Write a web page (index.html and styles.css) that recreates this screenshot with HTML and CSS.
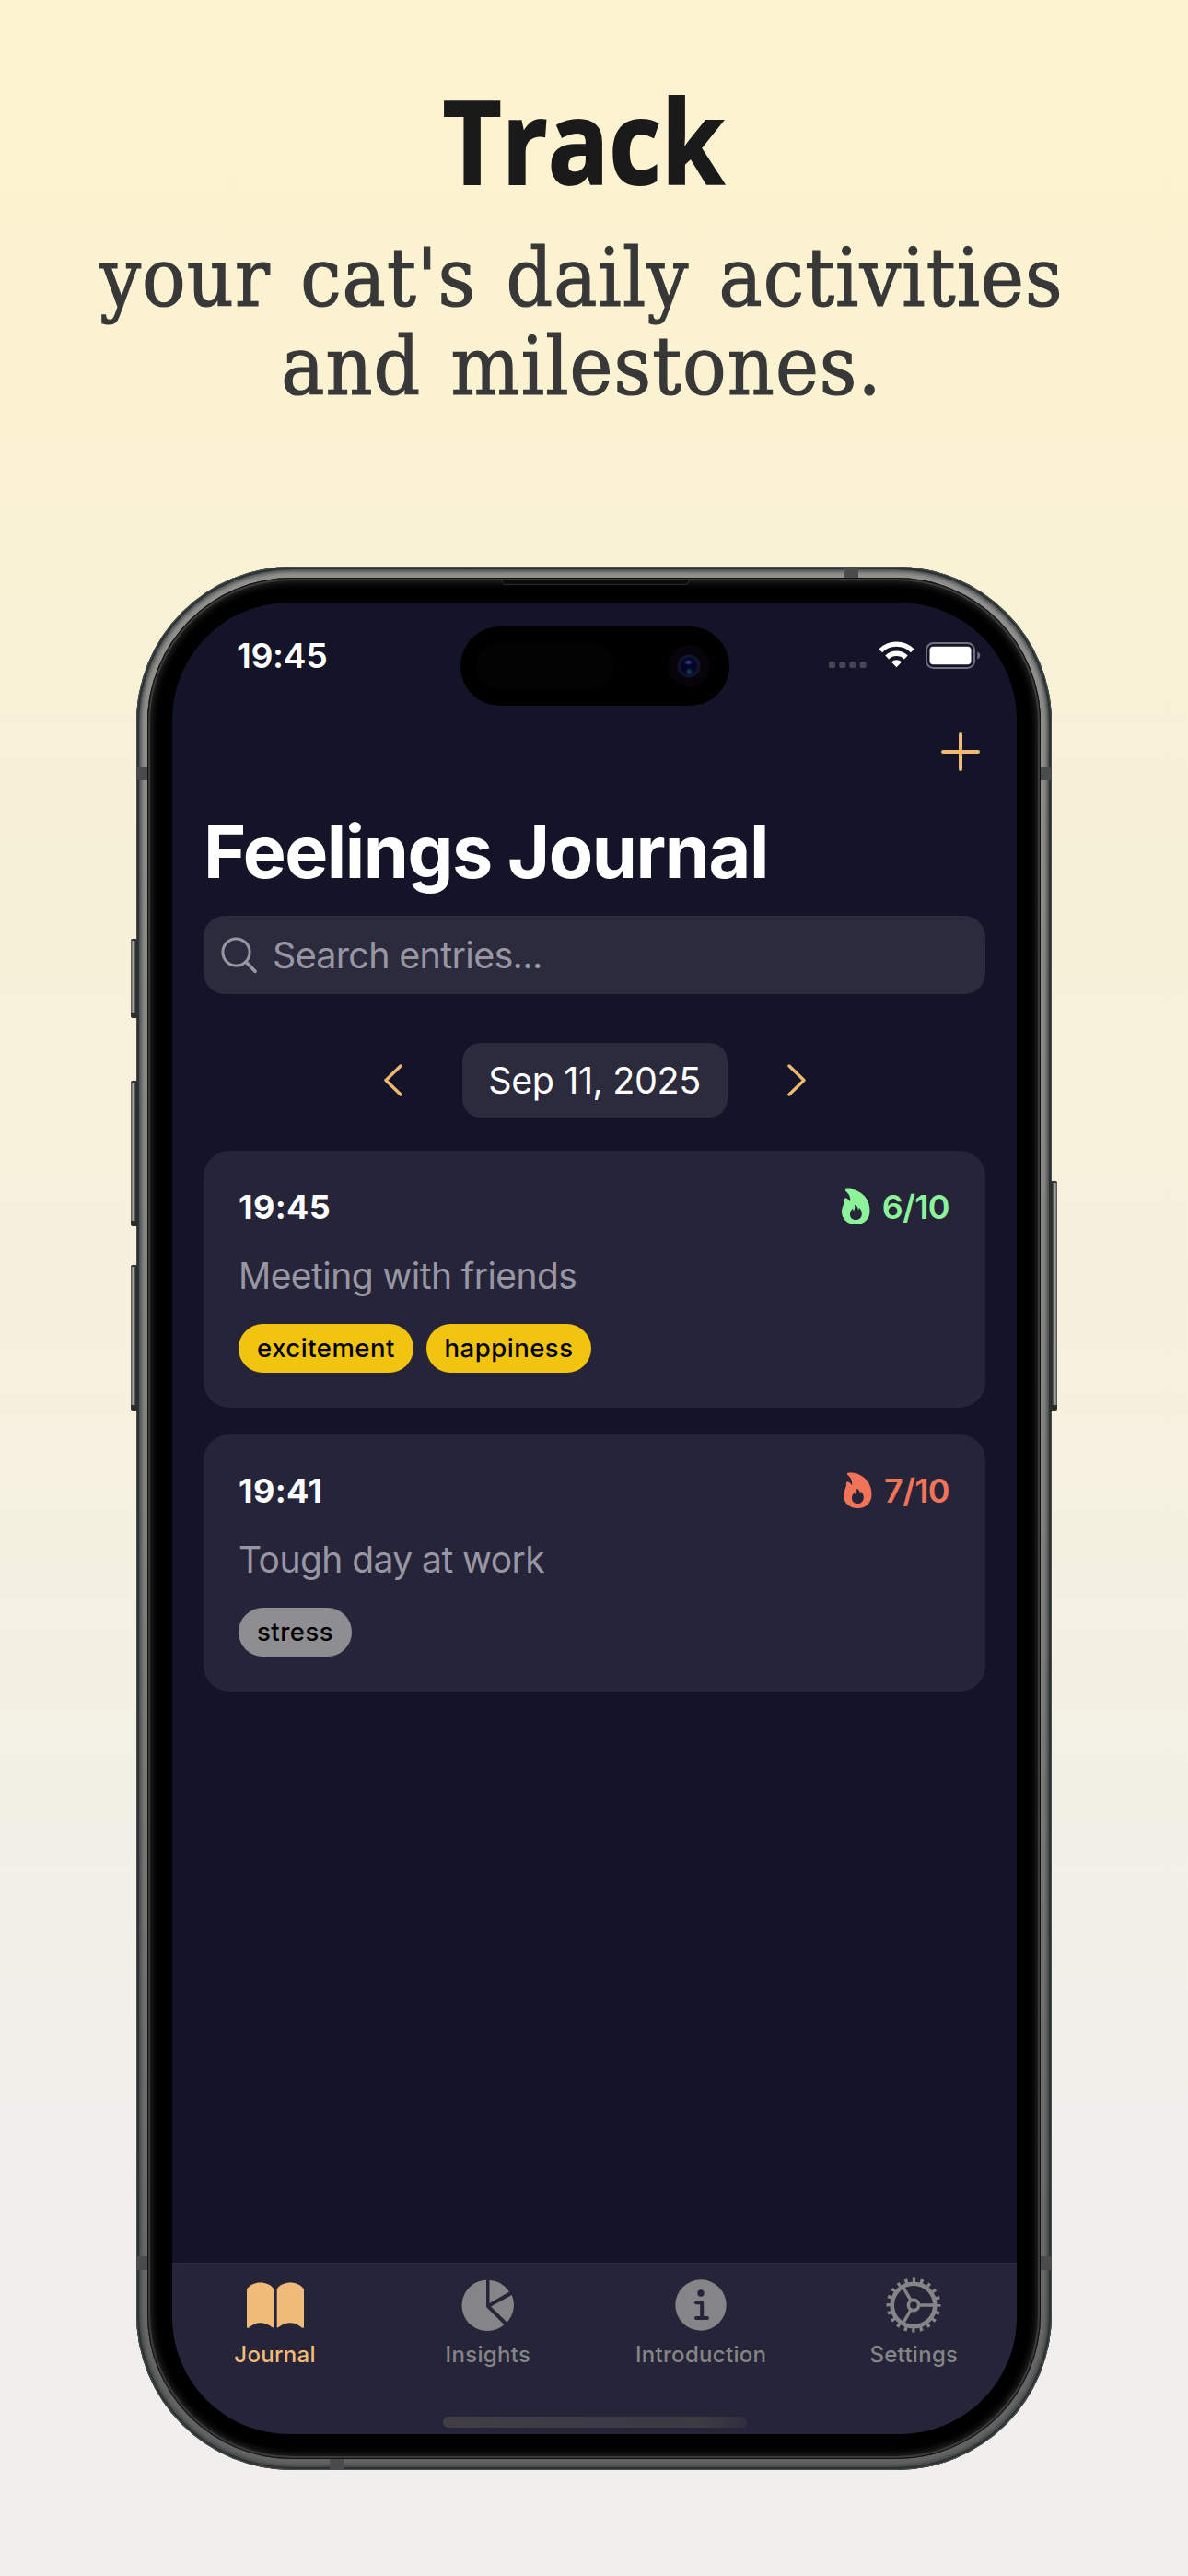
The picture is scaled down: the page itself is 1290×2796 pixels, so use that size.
FILE: index.html
```html
<!DOCTYPE html>
<html lang="en">
<head>
<meta charset="utf-8">
<title>Feelings Journal</title>
<link rel="stylesheet" href="styles.css">
</head>
<body>
<main class="poster">
  <header class="headline">
    <h1 class="headline-title">Track</h1>
    <p class="headline-sub">your cat's daily activities</p>
    <p class="headline-sub second">and milestones.</p>
  </header>

  <section class="phone">
    <i class="key left key-action"></i>
    <i class="key left key-up"></i>
    <i class="key left key-down"></i>
    <i class="key right key-power"></i>
    <div class="bezel">
      <i class="speaker"></i>
      <div class="screen">
        <i class="island"><i class="sensor"></i><i class="camera"></i></i>
        <div class="status">
          <span class="status-time">19:45</span>
          <span class="status-icons">
            <svg class="dots" width="41" height="7" viewBox="0 0 41 7"><g fill="#484656"><rect width="7" height="7" rx="2.6"/><rect x="11.3" width="7" height="7" rx="2.6"/><rect x="22.4" width="7" height="7" rx="2.6"/><rect x="33.6" width="7" height="7" rx="2.6"/></g></svg>
            <svg class="wifi" width="39" height="29" viewBox="0 0 39 29"><g fill="none" stroke="#fff" stroke-width="5.4"><path d="M2.2 10.3a24.5 24.5 0 0 1 34.6 0"/><path d="M9.2 17.5a14.6 14.6 0 0 1 20.6 0"/></g><path d="M19.5 28.2l-5.6-5.6a8 8 0 0 1 11.2 0z" fill="#fff"/></svg>
            <svg class="battery" width="60" height="29" viewBox="0 0 60 29"><rect x="1" y="1" width="52" height="27" rx="7.5" fill="none" stroke="#706f7f" stroke-width="2"/><rect x="4.5" y="4.7" width="45" height="19.6" rx="4" fill="#fff"/><path d="M56.3 10.200q3 1.500 3 4.300t-3 4.300z" fill="#706f7f"/></svg>
          </span>
        </div>
        <div class="navbar">
          <svg width="42" height="42" viewBox="0 0 42 42"><path d="M21 2v38M2 21h38" stroke="#f1b873" stroke-width="4" stroke-linecap="round"/></svg>
        </div>
        <h2 class="title">Feelings Journal</h2>
        <div class="search">
          <svg width="40" height="40" viewBox="0 0 40 40"><g fill="none" stroke="#9896a3" stroke-width="3" stroke-linecap="round"><circle cx="16.500" cy="16.500" r="14.600"/><path stroke-width="3.800" d="M27.500 27.500l9.500 9.800"/></g></svg>
          <span>Search entries...</span>
        </div>
        <div class="dates">
          <svg width="20" height="35" viewBox="0 0 20 35"><path d="M18 2L2 17.500L18 33" fill="none" stroke="#f1b873" stroke-width="3.400" stroke-linecap="round" stroke-linejoin="round"/></svg>
          <span class="date"><span>Sep 11, 2025</span></span>
          <svg width="20" height="35" viewBox="0 0 20 35"><path d="M2 2L18 17.500L2 33" fill="none" stroke="#f1b873" stroke-width="3.400" stroke-linecap="round" stroke-linejoin="round"/></svg>
        </div>
        <div class="entries">
          <article class="entry">
            <div class="entry-head">
              <b class="entry-time">19:45</b>
              <span class="score good"><svg width="31" height="39" viewBox="0 0 31 39"><path fill="currentColor" fill-rule="evenodd" d="M4.500.8C15-1.300 30.500 7 30.500 24C30.500 33 24.500 39 15.500 39C6 39 0 33 0 25C0 20 3 17.500 3 13C3 10.500 3.500 9.800 5 10.600C7 11.500 8.500 13 9 14.500C9.800 10 8.500 6.500 4.500 3C3.600 2 3.700 1 4.500.8ZM13.800 17.500C15 21 13.500 22.500 13.200 24.500C12.500 24 12.300 23 12.200 21.500C9.500 24 8.800 26.500 9 28.500C9.300 32.500 12 34 15.500 34C19 34 21.800 31.500 21.800 27.500C21.800 24 20 21.500 18.800 21C18.800 22 18.600 22.800 17.800 23.200C17.800 20.500 16.500 18.500 13.800 17.500Z"/></svg><span>6/10</span></span>
            </div>
            <p class="entry-text">Meeting with friends</p>
            <div class="chips"><span class="chip c1"><span>excitement</span></span><span class="chip c2"><span>happiness</span></span></div>
          </article>
          <article class="entry">
            <div class="entry-head">
              <b class="entry-time">19:41</b>
              <span class="score bad"><svg width="31" height="39" viewBox="0 0 31 39"><path fill="currentColor" fill-rule="evenodd" d="M4.500.8C15-1.300 30.500 7 30.500 24C30.500 33 24.500 39 15.500 39C6 39 0 33 0 25C0 20 3 17.500 3 13C3 10.500 3.500 9.800 5 10.600C7 11.500 8.500 13 9 14.500C9.800 10 8.500 6.500 4.500 3C3.600 2 3.700 1 4.500.8ZM13.800 17.500C15 21 13.500 22.500 13.200 24.500C12.500 24 12.300 23 12.200 21.500C9.500 24 8.800 26.500 9 28.500C9.300 32.500 12 34 15.500 34C19 34 21.800 31.500 21.800 27.500C21.800 24 20 21.500 18.800 21C18.800 22 18.600 22.800 17.800 23.200C17.800 20.500 16.500 18.500 13.800 17.500Z"/></svg><span>7/10</span></span>
            </div>
            <p class="entry-text">Tough day at work</p>
            <div class="chips"><span class="chip c3"><span>stress</span></span></div>
          </article>
        </div>
        <nav class="tabs">
          <div class="tab active">
            <svg width="64" height="60" viewBox="0 0 64 60"><path fill="currentColor" d="M1 12.500C5 7.500 10 5.500 15.500 5.500C21.500 5.500 27 7.500 30.300 12.500V53.500Q30.300 55 28.500 54C24 50.800 20 49.300 16 49.300C11.500 49.300 7 51.300 3.500 54.200Q1 55.500 1 53.500ZM33.700 12.500C37 7.500 42.500 5.500 48.500 5.500C54 5.500 59 7.500 63 12.500V53.500Q63 55.500 60.500 54.200C57 51.300 52.500 49.300 48 49.300C44 49.300 40 50.800 35.500 54Q33.700 55 33.700 53.500Z"/></svg>
            <span>Journal</span>
          </div>
          <div class="tab">
            <svg width="60" height="60" viewBox="0 0 60 60"><g fill="currentColor"><path d="M28 2.700A27.700 27.700 0 1 0 47.400 51.300L28 32Z"/><path d="M31.500 2.700A27.700 27.700 0 0 1 53 15.500L31.500 28Z"/><path d="M55.800 19A27.700 27.700 0 0 1 50.500 48.600L33 31.500Z"/></g></svg>
            <span>Insights</span>
          </div>
          <div class="tab">
            <svg width="60" height="60" viewBox="0 0 60 60"><circle cx="30" cy="30" r="27.700" fill="currentColor"/><circle cx="30" cy="17" r="3.700" fill="#262438"/><path d="M25 27.300h6.200V44M25 44h12" fill="none" stroke="#262438" stroke-width="4" stroke-linecap="round" stroke-linejoin="round"/></svg>
            <span>Introduction</span>
          </div>
          <div class="tab">
            <svg width="60" height="60" viewBox="0 0 60 60"><g fill="none" stroke="currentColor"><circle cx="30" cy="30" r="23.300" stroke-width="4.600"/><circle cx="30" cy="30" r="27" stroke-width="5" stroke-dasharray="3.300 5.182" stroke-dashoffset="1.650"/><circle cx="30" cy="30" r="5.600" stroke-width="3.600"/><path stroke-width="3.400" d="M36.500 30H52M26.700 24.400L18.500 10.200M26.700 35.600L18.500 49.800"/></g></svg>
            <span>Settings</span>
          </div>
        </nav>
        <i class="home"></i>
      </div>
    </div>
    <i class="band band-tl"></i><i class="band band-tr"></i><i class="band band-bl"></i><i class="band band-br"></i><i class="band-h band-top"></i><i class="band-h band-bottom"></i>
  </section>
</main>
</body>
</html>
```
FILE: styles.css
```css
* { box-sizing: border-box; margin: 0; padding: 0; }
body { width: 1290px; height: 2796px; overflow: hidden; }
svg { display: block; flex: none; }
i { display: block; }

.poster {
  width: 1290px; height: 2796px; overflow: hidden;
  display: flex; flex-direction: column; align-items: center;
  background: linear-gradient(#fdf3cf 0%, #fbf2d2 16%, #f8f1d8 30%, #f7f0dd 50%, #f4f1e3 64%, #f1f0ea 78%, #f0efee 88%, #f0efee 100%);
  font-family: Inter, "Liberation Sans", sans-serif;
}

.headline { height: 615px; padding-top: 66px; width: 1290px; flex: none; display: flex; flex-direction: column; align-items: center; white-space: nowrap; }
.headline-title { font: 700 126px/171px "Open Sans", sans-serif; color: #1a1a1a; transform: scaleX(.875); margin-left: -22px; -webkit-text-stroke: 2px #1a1a1a; }
.headline-sub { font: 88px/96px "DejaVu Serif Condensed", "DejaVu Serif", serif; color: #383838; margin-left: -27px; margin-top: 17px; letter-spacing: 1.100px; word-spacing: 6px; -webkit-text-stroke: 1.200px #383838; }
.headline-sub.second { margin-top: 0; }

.phone {
  position: relative; flex: none; width: 994px; height: 2066px; padding: 12px;
  border-radius: 169px; background: linear-gradient(#92918e, #83827f 50%, #626461);
  box-shadow: inset 0 0 0 1px #4b4f4e, inset 0 0 0 3px #2c3133, inset 0 0 4px 5px #3c4143;
}
.bezel {
  position: relative; height: 100%; padding: 27px 26px 26px 27px; border-radius: 157px; background: #000;
  box-shadow: inset 0 0 0 1px #111, inset 0 0 0 3px #3a3a3a, inset 0 0 10px 3px #3a3a3a;
}
.speaker { position: absolute; left: 385px; top: 2px; width: 203px; height: 6px; background: #0c0c0c; border-radius: 0 0 4px 4px; border: 1px solid #2b2b2b; border-top: 0; }
.screen {
  position: relative; height: 1988px; width: 917px; overflow: hidden; border-radius: 127px;
  background: #141428; display: flex; flex-direction: column; color: #fff;
}
.key { position: absolute; width: 7px; background: linear-gradient(90deg, #4a4b48, #a5a5a0 35%, #383a38 75%, #222); border-radius: 2px 0 0 2px; border-top: 2px solid #333; border-bottom: 6px solid #2c2c2a; }
.left { left: -6px; }
.right { right: -6px; transform: scaleX(-1); }
.key-action { top: 404px; height: 86px; }
.key-up { top: 558px; height: 158px; }
.key-down { top: 758px; height: 158px; }
.key-power { top: 667px; height: 249px; }
.band { position: absolute; width: 12px; height: 15px; background: #4a4b4d; }
.band-tl { left: 0; top: 217px; }
.band-tr { right: 0; top: 217px; }
.band-bl { left: 0; top: 1834px; }
.band-br { right: 0; top: 1834px; }
.band-h { position: absolute; width: 15px; height: 12px; background: #4a4b4d; }
.band-top { left: 769px; top: 0; }
.band-bottom { left: 210px; bottom: 0; }

.island { position: absolute; left: 313px; top: 26px; width: 292px; height: 86px; border-radius: 43px; background: #000; }
.sensor { position: absolute; left: 17px; top: 17px; width: 150px; height: 51px; border-radius: 26px; background: #030303; }
.camera { position: absolute; left: 225px; top: 20px; width: 46px; height: 46px; border-radius: 50%; background: radial-gradient(ellipse 5px 3px at 49% 41%, #4a4aa0, transparent), radial-gradient(circle at 51% 63%, #0d4450 0 1px, transparent 4px), radial-gradient(circle, #050528 0 8px, #10142c 10px 12px, #06040a 13px, #060308 100%); }

.status { height: 134px; flex: none; display: flex; justify-content: space-between; padding: 34px 39px 0 70px; }
.status-time { font-size: 37.500px; line-height: 48px; font-weight: 600; letter-spacing: -.4px; }
.status-icons { display: flex; height: 37px; align-items: flex-end; }
.wifi { margin-left: 12.500px; }
.battery { margin-left: 12.500px; margin-bottom: -1px; }
.navbar { height: 88px; flex: none; padding: 7px 40px 0; display: flex; justify-content: flex-end; }
.title { margin-left: 34px; height: 118px; flex: none; font-size: 79px; line-height: 96px; font-weight: 700; letter-spacing: -1.450px; white-space: nowrap; }
.search { margin: 0 34px; height: 85px; flex: none; border-radius: 23px; background: #2c2b3d; padding-left: 19px; display: flex; align-items: center; gap: 16px; color: #9896a3; font-size: 39.500px; letter-spacing: -.7px; }
.dates { height: 170px; padding-top: 17px; flex: none; display: flex; justify-content: center; align-items: center; gap: 65px; }
.date { width: 288px; height: 81px; border-radius: 20px; background: #2c2b3d; display: flex; align-items: center; justify-content: center; font-size: 39.500px; letter-spacing: -.4px; white-space: nowrap; }
.entries { padding: 0 34px; flex: 1; display: flex; flex-direction: column; gap: 29px; }
.entry { height: 279px; border-radius: 28px; background: #262438; padding: 38px; }
.entry-head { height: 45px; display: flex; justify-content: space-between; align-items: center; font-size: 36px; }
.entry-time { font-weight: 700; letter-spacing: .4px; }
.score { display: flex; align-items: center; gap: 13px; padding-right: 1px; font-weight: 600; letter-spacing: -.6px; }
.good { color: #8cf39b; }
.bad { color: #f27458; }
.entry-text { margin-top: 28px; height: 50px; line-height: 50px; font-size: 39px; letter-spacing: -.55px; color: #9896a3; }
.chips { margin-top: 27px; display: flex; gap: 14px; }
.chip { height: 53px; padding-bottom: 2px; border-radius: 27px; background: #f1c40f; color: #000; display: flex; justify-content: center; align-items: center; font-size: 27.500px; font-weight: 500; letter-spacing: .5px; }
.c1 { width: 190px; } .c2 { width: 179px; } .c3 { width: 123px; background: #8e8d92; }
.tabs { height: 186px; flex: none; margin: 0 -4px; padding-top: 15px; background: #262438; border-top: 1px solid #2c2a3d; display: flex; }
.tab { flex: 1; display: flex; flex-direction: column; align-items: center; gap: 8px; color: #858486; font-size: 24px; font-weight: 500; letter-spacing: .3px; line-height: 32px; }
.active { color: #f1bc79; }
.home { position: absolute; left: 294px; bottom: 7px; width: 330px; height: 12px; border-radius: 6px; background: linear-gradient(90deg, #413f44, #3b3a46 50%, #3c3b42 85%, #302e3f); }
```
